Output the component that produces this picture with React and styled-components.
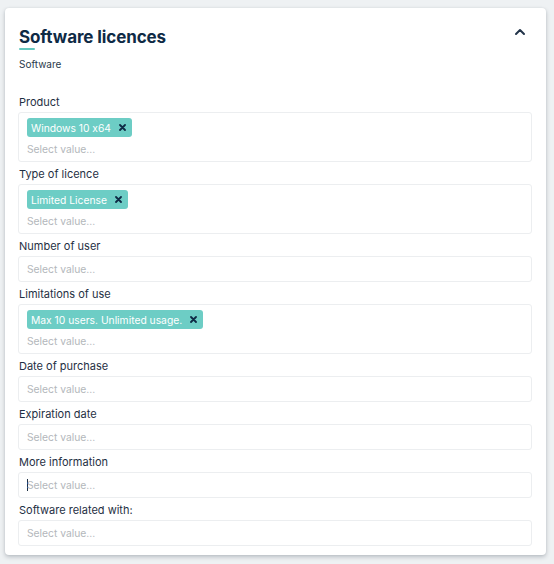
import React from "react";
import styled, { createGlobalStyle } from "styled-components";

const GlobalStyle = createGlobalStyle`
  html, body {
    margin: 0;
    background: #eef1f3;
  }
  body {
    padding: 8px 8px 9px 5px;
    font-family: Inter, "Noto Sans", sans-serif;
    font-feature-settings: "calt" 0;
    color: #1d2f42;
  }
`;

const Card = styled.section`
  background: #fff;
  border-radius: 4px;
  box-shadow: 0 2px 4px rgba(30, 45, 60, 0.25), 0 0 2px rgba(30, 45, 60, 0.08);
  padding: 19px 14px 9px 13px;
`;

const Header = styled.div`
  display: flex;
  justify-content: space-between;
  align-items: flex-start;
  margin-bottom: 23px;
  padding-left: 1px;
`;

const TitleBlock = styled.div`
  display: flex;
  flex-direction: column;
`;

const Title = styled.h2`
  margin: 0;
  font-size: 17px;
  line-height: 20px;
  font-weight: 700;
  color: #0e2a45;
  letter-spacing: -0.1px;
`;

const Underline = styled.span`
  display: block;
  width: 16px;
  height: 2px;
  margin-top: 1px;
  background: #63c8bf;
  border-radius: 1px;
`;

const Subtitle = styled.div`
  margin-top: 7px;
  font-size: 10px;
  line-height: 14px;
  color: #2a3a4b;
`;

const Toggle = styled.button`
  border: 0;
  background: none;
  padding: 0;
  margin: 1px 6px 0 0;
  display: flex;
  cursor: pointer;
`;

const Field = styled.div`
  margin-top: 4px;
`;

const Label = styled.div`
  font-size: 11px;
  line-height: 16px;
  color: #1f3044;
  margin-bottom: 2px;
  padding-left: 1px;
`;

const Box = styled.div`
  border: 1px solid #eceef0;
  border-radius: 3px;
  background: #fff;
`;

const Tags = styled.div`
  display: flex;
  flex-wrap: wrap;
  gap: 4px;
  padding: 5px 8px 0;
`;

const Tag = styled.span`
  display: inline-flex;
  align-items: center;
  gap: 8px;
  height: 19px;
  padding: 0 6px 0 4px;
  border-radius: 3px;
  background: #6dcdc5;
  color: #fff;
  font-size: 10.3px;
`;

const Input = styled.div`
  height: 24px;
  display: flex;
  align-items: center;
  padding: 0 8px;
  font-size: 10.3px;
  color: #b3b7bb;
`;

const Caret = styled.span`
  display: inline-block;
  width: 1px;
  height: 12px;
  background: #1d2f42;
  margin-right: -1px;
`;

const Remove = () => (
  <svg width="7" height="7" viewBox="0 0 7 7">
    <path d="M1 1L6 6M6 1L1 6" stroke="#0e2a45" strokeWidth="1.8" strokeLinecap="round" />
  </svg>
);

const fields = [
  { label: "Product", tags: ["Windows 10 x64"] },
  { label: "Type of licence", tags: ["Limited License"] },
  { label: "Number of user" },
  { label: "Limitations of use", tags: ["Max 10 users. Unlimited usage."] },
  { label: "Date of purchase" },
  { label: "Expiration date" },
  { label: "More information", focused: true },
  { label: "Software related with:" },
];

const App = () => (
  <>
    <GlobalStyle />
    <Card>
      <Header>
        <TitleBlock>
          <Title>Software licences</Title>
          <Underline />
          <Subtitle>Software</Subtitle>
        </TitleBlock>
        <Toggle aria-label="Collapse">
          <svg width="12" height="8" viewBox="0 0 12 8">
            <path d="M2 6L6 2L10 6" fill="none" stroke="#22344a" strokeWidth="2" strokeLinecap="round" strokeLinejoin="round" />
          </svg>
        </Toggle>
      </Header>
      {fields.map((f) => (
        <Field key={f.label}>
          <Label>{f.label}</Label>
          <Box>
            {f.tags && (
              <Tags>
                {f.tags.map((t) => (
                  <Tag key={t}>
                    {t}
                    <Remove />
                  </Tag>
                ))}
              </Tags>
            )}
            <Input>
              {f.focused && <Caret />}
              Select value...
            </Input>
          </Box>
        </Field>
      ))}
    </Card>
  </>
);

export default App;
